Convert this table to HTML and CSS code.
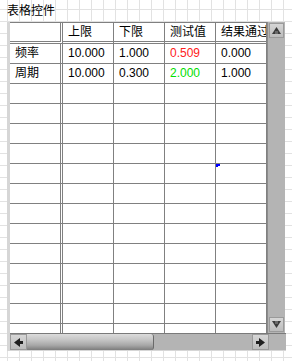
FILE: index.html
```html
<!DOCTYPE html>
<html lang="zh-CN">
<head>
    <meta charset="UTF-8">
    <meta name="viewport" content="width=device-width, initial-scale=1.0">
    <title>表格控件</title>
    <link rel="stylesheet" href="styles.css">
</head>
<body>
    <div class="label">表格控件</div>

    <div class="table-ctl">
        <div class="view">
            <div class="grid">
                <div class="cell corner"></div>
                <div class="cell head">上限</div>
                <div class="cell head">下限</div>
                <div class="cell head">测试值</div>
                <div class="cell head">结果通过</div>

                <div class="cell rowhead">频率</div>
                <div class="cell">10.000</div>
                <div class="cell">1.000</div>
                <div class="cell fail">0.509</div>
                <div class="cell">0.000</div>

                <div class="cell rowhead">周期</div>
                <div class="cell">10.000</div>
                <div class="cell">0.300</div>
                <div class="cell pass">2.000</div>
                <div class="cell">1.000</div>
            </div>
            <div class="cursor"></div>

            <div class="vscroll">
                <div class="sbtn">
                    <svg width="9" height="7" viewBox="0 0 9 7"><polygon points="4.5,0 9,7 0,7" fill="#3c3c3c"/><rect x="3" y="4" width="3" height="3" fill="#6a6a6a"/></svg>
                </div>
                <div class="vtrack"></div>
                <div class="sbtn">
                    <svg width="9" height="7" viewBox="0 0 9 7"><polygon points="0,0 9,0 4.5,7" fill="#3c3c3c"/><rect x="3" y="0" width="3" height="3" fill="#6a6a6a"/></svg>
                </div>
            </div>
        </div>

        <div class="hscroll">
            <div class="sbtn">
                <svg width="9" height="9" viewBox="0 0 9 9"><polygon points="0,4.5 6,0 6,9" fill="#202020"/><rect x="5" y="3" width="4" height="3" fill="#202020"/></svg>
            </div>
            <div class="thumb"></div>
            <div class="htrack"></div>
            <div class="sbtn">
                <svg width="9" height="9" viewBox="0 0 9 9"><polygon points="9,4.5 3,0 3,9" fill="#202020"/><rect x="0" y="3" width="4" height="3" fill="#202020"/></svg>
            </div>
            <div class="corner-box"></div>
        </div>
    </div>

    <script>
        // fill the empty rows below the data
        const grid = document.querySelector('.grid');
        for (let r = 0; r < 13; r++) {
            for (let c = 0; c < 5; c++) {
                const cell = document.createElement('div');
                cell.className = c === 0 ? 'cell rowhead' : 'cell';
                grid.appendChild(cell);
            }
        }
    </script>
</body>
</html>
```

FILE: styles.css
```css
body {
    margin: 0;
    font-family: "Liberation Sans", "Noto Sans CJK SC", sans-serif;
    font-size: 12px;
    color: #000;
    background-color: #fff;
    background-image:
        linear-gradient(to right, #e2e2e2 1px, transparent 1px),
        linear-gradient(to bottom, #e2e2e2 1px, transparent 1px);
    background-size: 12px 12px;
    background-position: 7px 9px;
    width: 292px;
    height: 361px;
    overflow: hidden;
}
.label {
    padding: 4px 0 0 7px;
    height: 22px;
    line-height: 14px;
    box-sizing: border-box;
}
.table-ctl {
    margin-left: 7px;
    width: 276px;
    border-left: 3px solid #d6d6d6;
    border-bottom: 1px solid #d6d6d6;
}
.view {
    position: relative;
    display: flex;
    height: 311px;
}
.grid {
    display: grid;
    grid-template-columns: 53px 51px 51px 51px 51px;
    grid-auto-rows: 20px;
    grid-template-rows: 21px;
    width: 257px;
    height: 310px;
    overflow: hidden;
    border-top: 1px solid #808080;
    background: #fff;
}
.cell {
    border-right: 1px solid #808080;
    border-bottom: 1px solid #808080;
    padding-left: 5px;
    line-height: 19px;
    white-space: nowrap;
    overflow: hidden;
}
.rowhead,
.corner {
    border-right: 3px double #808080;
}
.head,
.corner {
    border-bottom: 3px double #808080;
    line-height: 18px;
}
.fail {
    color: #ff2020;
}
.pass {
    color: #00e000;
}
.cursor {
    position: absolute;
    left: 206px;
    top: 142px;
    width: 2px;
    height: 1px;
    border-top: 2px solid #0000ff;
    border-left: 2px solid #0000ff;
}
.vscroll {
    width: 17px;
    display: flex;
    flex-direction: column;
    background: #b4b4b4;
    border-left: 1px solid #8c8c8c;
}
.vtrack {
    flex: 1;
}
.sbtn {
    width: 15px;
    height: 15px;
    margin: 1px;
    display: flex;
    align-items: center;
    justify-content: center;
    background: linear-gradient(#d6d6d6, #bcbcbc);
    border: 1px solid #9a9a9a;
    box-sizing: border-box;
}
.hscroll {
    display: flex;
    height: 16px;
    background: #b4b4b4;
    border-top: 1px solid #7a7a7a;
}
.hscroll .sbtn {
    width: 17px;
    height: 16px;
    margin: 0;
}
.thumb {
    width: 126px;
    background: linear-gradient(#dcdcdc, #c6c6c6 35%, #a8a8a8 70%, #7c7c7c);
    border-right: 1px solid #6a6a6a;
    border-radius: 0 3px 3px 0;
}
.htrack {
    flex: 1;
}
.corner-box {
    width: 17px;
}
```
